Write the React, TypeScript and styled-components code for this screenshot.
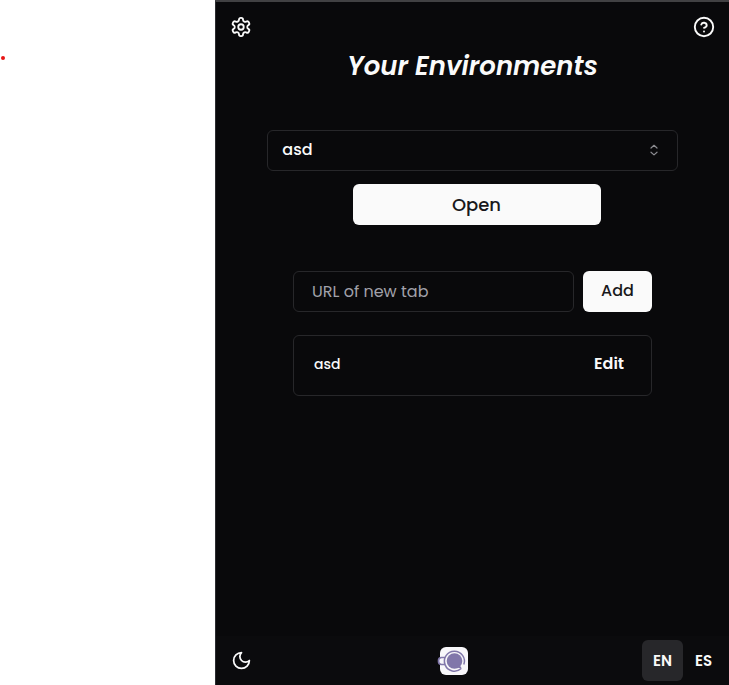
import React, { useState } from 'react';
import styled, { createGlobalStyle } from 'styled-components';

const GlobalStyle = createGlobalStyle`
  *, *::before, *::after { box-sizing: border-box; }
  body { margin: 0; background: #fff; }
  button, input, select { font: inherit; color: inherit; }
`;

const Page = styled.div`
  display: grid;
  grid-template-columns: minmax(0, 215fr) minmax(0, 514fr);
  min-height: 100vh;
  font-family: Poppins, Inter, sans-serif;
  font-size: 16px;
  font-weight: 500;
  line-height: 24px;
  color: #fafafa;
`;

const Margin = styled.aside`
  padding: 56px 0 0 1px;
`;

const Dot = styled.span`
  display: block;
  width: 4px;
  height: 4px;
  border-radius: 2px;
  background: #e81515;
`;

const Popup = styled.div`
  display: flex;
  flex-direction: column;
  background: #09090b;
  border-top: 2px solid #414143;
  border-left: 1px solid #2b2c30;
`;

const Header = styled.header`
  display: flex;
  justify-content: space-between;
  padding: 14px 14px 0;
`;

const IconButton = styled.button`
  display: flex;
  padding: 0;
  border: 0;
  background: none;
  cursor: pointer;
`;

const ThemeButton = styled(IconButton)`
  width: 32px;
`;

const Title = styled.h1`
  margin: 10px 0 46px;
  font-size: 26px;
  line-height: 36px;
  font-weight: 600;
  font-style: italic;
  text-align: center;
`;

const Main = styled.main`
  flex: 1;
  display: flex;
  flex-direction: column;
  align-items: center;
`;

const SelectBox = styled.div`
  display: grid;
  align-items: center;
  width: 80%;
  margin-bottom: 13px;
  & > * { grid-area: 1 / 1; }
  & > svg { justify-self: end; margin: 0 16px 2px 0; pointer-events: none; }
`;

const Select = styled.select`
  appearance: none;
  width: 100%;
  height: 41px;
  padding: 0 14px 2px;
  border: 1px solid #27272a;
  border-radius: 6px;
  background: #09090b;
`;

const SolidButton = styled.button`
  height: 41px;
  padding: 0 18px 2px;
  border: 0;
  border-radius: 6px;
  background: #fafafa;
  color: #18181b;
  cursor: pointer;
`;

const OpenButton = styled(SolidButton)`
  width: 248px;
  margin-left: 8px;
  padding-bottom: 0;
  font-size: 18px;
`;

const Tabs = styled.section`
  width: 70%;
  margin-top: 46px;
`;

const AddForm = styled.form`
  display: flex;
  gap: 9px;
  margin-bottom: 23px;
`;

const AddButton = styled(SolidButton)`
  width: 69px;
`;

const UrlInput = styled.input`
  flex: 1;
  min-width: 0;
  height: 41px;
  padding: 0 18px;
  border: 1px solid #27272a;
  border-radius: 6px;
  background: transparent;
  font-weight: 400;
  &::placeholder { color: #a1a1aa; opacity: 1; }
`;

const TabRow = styled.div`
  display: flex;
  align-items: center;
  justify-content: space-between;
  height: 61px;
  padding: 0 27px 3px 20px;
  border: 1px solid #27272a;
  border-radius: 6px;
`;

const TabName = styled.span`
  font-size: 14px;
`;

const EditButton = styled(IconButton)`
  font-weight: 600;
`;

const Footer = styled.footer`
  display: flex;
  justify-content: space-between;
  align-items: center;
  height: 49px;
  padding: 0 5px 0 15px;
  background: #0b0b0d;
`;

const Languages = styled.div`
  display: flex;
  justify-content: flex-end;
`;

const Language = styled.button<{ $active: boolean }>`
  width: 41px;
  height: 41px;
  padding: 0;
  border: 0;
  border-radius: 6px;
  background: ${({ $active }) => ($active ? '#27272a' : 'transparent')};
  font-weight: 600;
  font-size: 15px;
  cursor: pointer;
`;

function GearIcon() {
  return (
    <svg width="22" height="22" viewBox="0 0 24 24" fill="none" stroke="currentColor" strokeWidth="2" strokeLinecap="round" strokeLinejoin="round">
      <path d="M12.22 2h-.44a2 2 0 0 0-2 2v.18a2 2 0 0 1-1 1.73l-.43.25a2 2 0 0 1-2 0l-.15-.08a2 2 0 0 0-2.73.73l-.22.38a2 2 0 0 0 .73 2.73l.15.1a2 2 0 0 1 1 1.72v.51a2 2 0 0 1-1 1.74l-.15.09a2 2 0 0 0-.73 2.73l.22.38a2 2 0 0 0 2.73.73l.15-.08a2 2 0 0 1 2 0l.43.25a2 2 0 0 1 1 1.73V20a2 2 0 0 0 2 2h.44a2 2 0 0 0 2-2v-.18a2 2 0 0 1 1-1.73l.43-.25a2 2 0 0 1 2 0l.15.08a2 2 0 0 0 2.73-.73l.22-.39a2 2 0 0 0-.73-2.73l-.15-.08a2 2 0 0 1-1-1.74v-.5a2 2 0 0 1 1-1.74l.15-.09a2 2 0 0 0 .73-2.73l-.22-.38a2 2 0 0 0-2.73-.73l-.15.08a2 2 0 0 1-2 0l-.43-.25a2 2 0 0 1-1-1.73V4a2 2 0 0 0-2-2z" />
      <circle cx="12" cy="12" r="3" />
    </svg>
  );
}

function HelpIcon() {
  return (
    <svg width="22" height="22" viewBox="0 0 22 22" fill="none" stroke="currentColor" strokeWidth="1.9" strokeLinecap="round" strokeLinejoin="round">
      <circle cx="11" cy="11" r="9.2" />
      <path d="M8.3 8.5a2.8 2.8 0 0 1 5.4.8c0 1.8-2.7 2.5-2.7 2.5" />
      <path d="M11 15.5h.01" />
    </svg>
  );
}

function MoonIcon() {
  return (
    <svg width="21" height="21" viewBox="0 0 24 24" fill="none" stroke="currentColor" strokeWidth="2" strokeLinecap="round" strokeLinejoin="round">
      <path d="M12 3a6 6 0 0 0 9 9 9 9 0 1 1-9-9Z" />
    </svg>
  );
}

function SortIcon() {
  return (
    <svg width="16" height="16" viewBox="0 0 16 16" fill="none" stroke="#8c8c91" strokeWidth="1.2" strokeLinecap="round" strokeLinejoin="round">
      <path d="M5 6l3-2.7L11 6M5 10.2l3 2.7 3-2.7" />
    </svg>
  );
}

function CupLogo() {
  return (
    <svg width="32" height="28" viewBox="0 0 32 28" role="img" aria-label="Cup">
      <rect x="3" y="0" width="28" height="28" rx="6" fill="#f8f7fa" />
      <path d="M8 10.5H4.5Q1.5 10.5 1.5 14t3 3.5H8" fill="#f8f7fa" stroke="#8177aa" strokeWidth="1.7" />
      <circle cx="17.5" cy="14" r="10" fill="#f8f7fa" />
      <path d="M24.2 21.5A10 10 0 1 1 26.8 17.6" fill="none" stroke="#8177aa" strokeWidth="1.5" />
      <circle cx="17.5" cy="14" r="7.8" fill="#8177aa" />
      <path d="M22 17l2.8 4.5-5-1z" fill="#8177aa" />
    </svg>
  );
}

export default function App() {
  const [language, setLanguage] = useState('EN');
  return (
    <Page>
      <GlobalStyle />
      <Margin><Dot /></Margin>
      <Popup>
        <Header>
          <IconButton aria-label="Settings"><GearIcon /></IconButton>
          <IconButton aria-label="Help"><HelpIcon /></IconButton>
        </Header>
        <Main>
          <Title>Your Environments</Title>
          <SelectBox>
            <Select aria-label="Environment" defaultValue="asd">
              <option value="asd">asd</option>
            </Select>
            <SortIcon />
          </SelectBox>
          <OpenButton>Open</OpenButton>
          <Tabs>
            <AddForm onSubmit={(event) => event.preventDefault()}>
              <UrlInput aria-label="URL of new tab" placeholder="URL of new tab" />
              <AddButton type="submit">Add</AddButton>
            </AddForm>
            <TabRow>
              <TabName>asd</TabName>
              <EditButton>Edit</EditButton>
            </TabRow>
          </Tabs>
        </Main>
        <Footer>
          <ThemeButton aria-label="Dark theme"><MoonIcon /></ThemeButton>
          <CupLogo />
          <Languages>
            {['EN', 'ES'].map((code) => (
              <Language key={code} $active={code === language} aria-pressed={code === language} onClick={() => setLanguage(code)}>
                {code}
              </Language>
            ))}
          </Languages>
        </Footer>
      </Popup>
    </Page>
  );
}
